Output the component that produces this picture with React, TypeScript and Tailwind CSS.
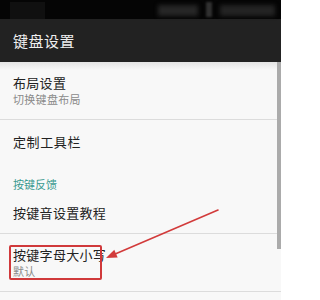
import React from 'react';

const font = { fontFamily: '"Noto Sans CJK SC", "Noto Sans", sans-serif' };

function TwoLineRow({ title, sub, marked }: { title: string; sub: string; marked?: boolean }) {
  return (
    <div className="relative h-[58px] flex flex-col items-start gap-[1px] border-b border-[#dcdcdc] pt-[13px] px-[13px]">
      <div className="text-[13px] leading-[16px] text-[#222] tracking-[0.3px]">{title}</div>
      <div className="text-[11px] leading-[14px] text-[#8a8a8a] tracking-[0.3px]">{sub}</div>
      {marked && (
        <div className="absolute left-[9px] top-[11px] w-[93px] h-[35px] border-2 border-[#d0393b] rounded-[2px]" />
      )}
    </div>
  );
}

export default function App() {
  return (
    <div className="relative w-[281px] h-[300px] overflow-hidden bg-[#f8f8f8] flex flex-col" style={font}>
      {/* status bar */}
      <div className="h-[19px] bg-[#050505] flex items-end gap-[8px] pl-[10px] pr-[6px]">
        <div className="w-[35px] h-[17px] bg-[#101010]" />
        <div className="flex-1" />
        <div className="w-[40px] h-[11px] mb-[3px] bg-[#262626] blur-[2px]" />
        <div className="w-[6px] h-[15px] mb-[2px] bg-[#303030] blur-[1px]" />
        <div className="w-[55px] h-[11px] mb-[3px] bg-[#232323] blur-[2px]" />
      </div>

      {/* toolbar */}
      <div className="h-[43px] bg-[#222] flex items-center px-[13px]">
        <span className="text-[15px] leading-[18px] text-[#eee] tracking-[0.5px]">键盘设置</span>
      </div>

      <div className="relative flex flex-col">
        <div className="absolute inset-x-0 top-0 h-[8px] bg-gradient-to-b from-[#e4e4e4] to-[#f8f8f8]" />

        <TwoLineRow title="布局设置" sub="切换键盘布局" />

        <div className="h-[44px] flex items-center px-[13px]">
          <span className="text-[13px] leading-[16px] text-[#222] tracking-[0.6px]">定制工具栏</span>
        </div>

        <div className="h-[29px] flex items-end pb-[2px] px-[13px]">
          <span className="text-[11px] leading-[14px] text-[#3a9a90]">按键反馈</span>
        </div>

        <div className="h-[41px] flex items-center border-b border-[#dcdcdc] px-[13px]">
          <span className="text-[13px] leading-[16px] text-[#222] tracking-[0.3px]">按键音设置教程</span>
        </div>

        <TwoLineRow title="按键字母大小写" sub="默认" marked />

        {/* scrollbar */}
        <div className="absolute right-0 top-0 w-[4px] h-[187px] bg-[#ababab]" />
      </div>

      {/* annotation arrow */}
      <svg className="absolute left-0 top-0" width="281" height="300" viewBox="0 0 281 300">
        <line x1="218" y1="210" x2="114" y2="254.6" stroke="#d23b3b" strokeWidth="1.6" strokeLinecap="round" />
        <polygon points="106,258 117.7,257.6 114.3,249.8" fill="#d23b3b" />
      </svg>
    </div>
  );
}
